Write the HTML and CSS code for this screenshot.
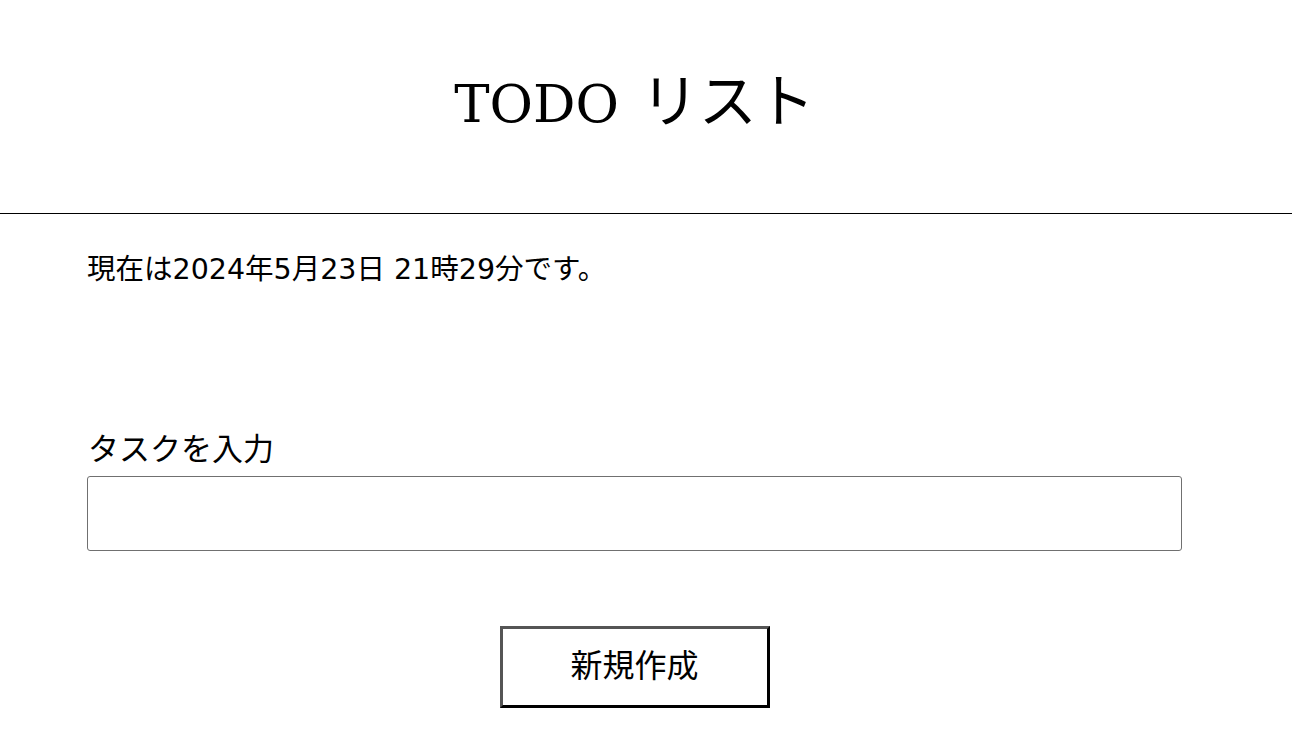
FILE: index.html
```html
<!DOCTYPE html>
<html lang="ja">
<head>
<meta charset="utf-8">
<title>TODO リスト</title>
<link rel="stylesheet" href="styles.css">
</head>
<body>
<header class="site-header">
  <h1 class="title">TODO <span class="title-ja">リスト</span></h1>
</header>
<main class="content">
  <p class="now">現在は2024年5月23日 21時29分です。</p>
  <form class="task-form">
    <label class="task-label" for="task">タスクを入力</label>
    <input class="task-input" id="task" type="text">
    <div class="actions">
      <button class="create-btn" type="button">新規作成</button>
    </div>
  </form>
</main>
</body>
</html>
```
FILE: styles.css
```css
html, body {
  margin: 0;
  padding: 0;
  background: #fff;
  color: #000;
}
body {
  font-family: "DejaVu Sans", "Noto Sans CJK JP", sans-serif;
}
.site-header {
  padding: 72px 110px 77px 87px;
  border-bottom: 1px solid #000;
}
.title {
  margin: 0;
  text-align: center;
  font-family: "DejaVu Serif", "Noto Sans CJK JP", serif;
  font-weight: normal;
  font-size: 53px;
  line-height: 64px;
}
.title-ja {
  font-family: "Noto Sans CJK JP", sans-serif;
  font-size: 58px;
  line-height: 0;
  margin-left: 5px;
}
.content {
  padding: 0 110px 0 87px;
}
.now {
  margin: 36px 0 0;
  font-size: 28.5px;
  line-height: 40px;
}
.task-form {
  display: flex;
  flex-direction: column;
  margin-top: 139px;
}
.task-label {
  display: block;
  font-size: 31px;
  line-height: 40px;
  padding-left: 1px;
}
.task-input {
  box-sizing: border-box;
  margin: 7px 0 0;
  width: 100%;
  height: 75px;
  border: 1px solid #707070;
  border-radius: 3px;
  font-size: 28px;
  padding: 0 8px;
  background: #fff;
}
.actions {
  display: flex;
  justify-content: center;
  margin-top: 75px;
}
.create-btn {
  box-sizing: border-box;
  width: 270px;
  height: 82px;
  border-width: 3px;
  border-style: solid;
  border-color: #555 #000 #000 #555;
  background: #fff;
  color: #000;
  font-family: "Noto Sans CJK JP", sans-serif;
  font-size: 32px;
  padding: 0 0 8px;
}
```
